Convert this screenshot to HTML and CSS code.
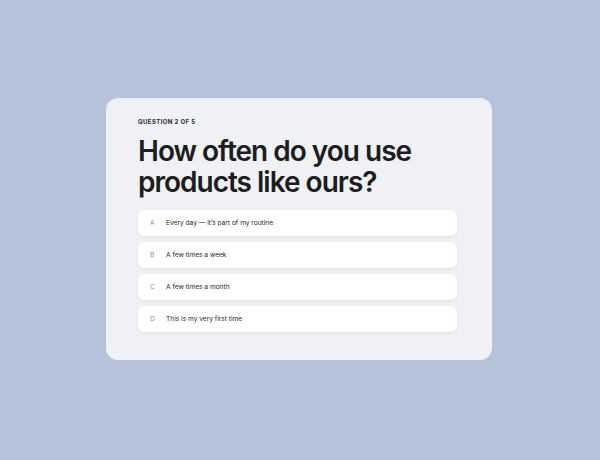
FILE: index.html
```
<!DOCTYPE html>
<html>
<head>
<meta charset="utf-8">
<link rel="stylesheet" href="styles.css">
</head>
<body>
<div class="page">
  <div class="card">
    <div class="label">QUESTION 2 OF 5</div>
    <h1 class="title">How often do you use products like ours?</h1>
    <div class="options">
      <div class="option"><span class="key">A</span><span class="text">Every day — it’s part of my routine</span></div>
      <div class="option"><span class="key">B</span><span class="text">A few times a week</span></div>
      <div class="option"><span class="key">C</span><span class="text">A few times a month</span></div>
      <div class="option"><span class="key">D</span><span class="text">This is my very first time</span></div>
    </div>
  </div>
</div>
</body>
</html>
```
FILE: styles.css
```
html, body {
  margin: 0;
  padding: 0;
}
body {
  background: #b6c2da;
  font-family: Inter, "Noto Sans", sans-serif;
  color: #1c1d21;
}
.page {
  width: 600px;
  height: 460px;
  box-sizing: border-box;
  padding: 98px 0 0 106px;
}
.card {
  width: 386px;
  box-sizing: border-box;
  background: #eff1f5;
  border-radius: 12px;
  padding: 20px 35px 28px 32px;
  display: flex;
  flex-direction: column;
}
.label {
  font-size: 6px;
  font-weight: 700;
  letter-spacing: 0.4px;
  line-height: 8px;
  color: #2a2b30;
}
.title {
  margin: 10px 0 12px 0;
  font-size: 28px;
  line-height: 31px;
  font-weight: 600;
  letter-spacing: -1px;
  color: #1c1d21;
  width: 300px;
}
.options {
  display: flex;
  flex-direction: column;
  gap: 6px;
}
.option {
  height: 26px;
  background: #ffffff;
  border-radius: 6px;
  box-shadow: 0 1px 3px rgba(30, 40, 70, 0.08);
  display: flex;
  align-items: center;
  padding-left: 12px;
  font-size: 6.6px;
}
.key {
  width: 16px;
  color: #8a8d96;
}
.text {
  color: #25262b;
}
```
